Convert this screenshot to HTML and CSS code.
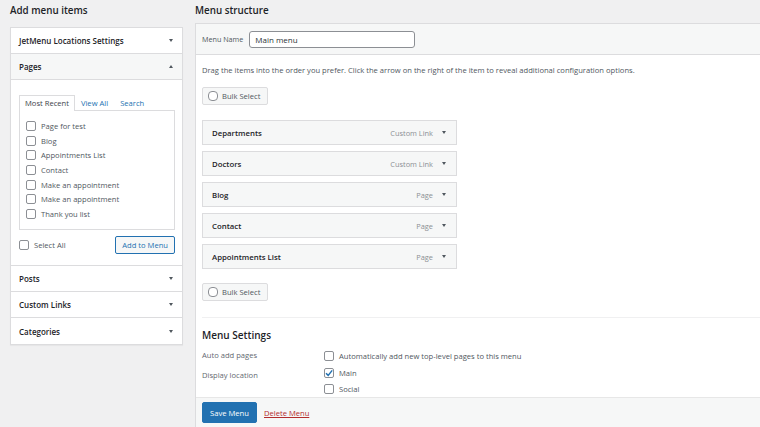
FILE: index.html
```html
<!DOCTYPE html>
<html>
<head>
<meta charset="utf-8">
<link rel="stylesheet" href="styles.css">
</head>
<body>
<div class="page">
  <div class="left">
    <h2 class="col-title">Add menu items</h2>
    <div class="accordion">
      <div class="acc-head"><span>JetMenu Locations Settings</span><span class="arr down"></span></div>
      <div class="acc-head open"><span>Pages</span><span class="arr up"></span></div>
      <div class="acc-body">
        <div class="tabs">
          <span class="tab active">Most Recent</span>
          <span class="tab">View All</span>
          <span class="tab">Search</span>
        </div>
        <div class="tab-panel">
          <label class="item"><span class="cb"></span>Page for test</label>
          <label class="item"><span class="cb"></span>Blog</label>
          <label class="item"><span class="cb"></span>Appointments List</label>
          <label class="item"><span class="cb"></span>Contact</label>
          <label class="item"><span class="cb"></span>Make an appointment</label>
          <label class="item"><span class="cb"></span>Make an appointment</label>
          <label class="item"><span class="cb"></span>Thank you list</label>
        </div>
        <div class="add-row">
          <label class="item sel-all"><span class="cb"></span>Select All</label>
          <button class="btn-outline">Add to Menu</button>
        </div>
      </div>
      <div class="acc-head"><span>Posts</span><span class="arr down"></span></div>
      <div class="acc-head"><span>Custom Links</span><span class="arr down"></span></div>
      <div class="acc-head last"><span>Categories</span><span class="arr down"></span></div>
    </div>
  </div>
  <div class="right">
    <h2 class="col-title">Menu structure</h2>
    <div class="panel">
      <div class="panel-head">
        <span class="name-label">Menu Name</span>
        <div class="name-input">Main menu</div>
      </div>
      <div class="panel-body">
        <p class="hint">Drag the items into the order you prefer. Click the arrow on the right of the item to reveal additional configuration options.</p>
        <div class="bulk"><span class="cb round"></span>Bulk Select</div>
        <ul class="menu-items">
          <li><span class="mi-title">Departments</span><span class="mi-type">Custom Link</span><span class="arr down"></span></li>
          <li><span class="mi-title">Doctors</span><span class="mi-type">Custom Link</span><span class="arr down"></span></li>
          <li><span class="mi-title">Blog</span><span class="mi-type">Page</span><span class="arr down"></span></li>
          <li><span class="mi-title">Contact</span><span class="mi-type">Page</span><span class="arr down"></span></li>
          <li><span class="mi-title">Appointments List</span><span class="mi-type">Page</span><span class="arr down"></span></li>
        </ul>
        <div class="bulk"><span class="cb round"></span>Bulk Select</div>
        <div class="settings">
          <h3>Menu Settings</h3>
          <div class="set-row">
            <span class="set-label">Auto add pages</span>
            <div class="set-ctrl"><label class="item"><span class="cb"></span>Automatically add new top-level pages to this menu</label></div>
          </div>
          <div class="set-row loc">
            <span class="set-label">Display location</span>
            <div class="set-ctrl">
              <label class="item"><span class="cb checked"><svg viewBox="0 0 10 10" width="10" height="10"><path d="M2 5.2 L4.2 7.4 L8.2 2.4" fill="none" stroke="#2271b1" stroke-width="1.5"/></svg></span>Main</label>
              <label class="item"><span class="cb"></span>Social</label>
            </div>
          </div>
        </div>
      </div>
      <div class="panel-foot">
        <button class="btn-primary">Save Menu</button>
        <a class="delete">Delete Menu</a>
      </div>
    </div>
  </div>
</div>
</body>
</html>
```
FILE: styles.css
```css
* { box-sizing: border-box; }
body {
  margin: 0;
  background: #f0f0f1;
  font-family: "Open Sans", "Noto Sans", sans-serif;
  font-size: 7.6px;
  color: #3c434a;
  overflow: hidden;
}
.page {
  display: flex;
  gap: 12px;
  padding-left: 10px;
  height: 427px;
}
.left { width: 173px; flex: none; }
.right { flex: 1; display: flex; flex-direction: column; }
.col-title {
  margin: 0;
  height: 27px;
  padding-top: 3px;
  font-size: 9.8px;
  font-weight: 600;
  color: #1d2327;
  line-height: 16px;
}
.accordion {
  background: #fff;
  border: 1px solid #dcdcde;
  box-shadow: 0 1px 1px rgba(0,0,0,0.04);
}
.acc-head {
  height: 26px;
  display: flex;
  align-items: center;
  justify-content: space-between;
  padding: 0 8px 0 8px;
  font-weight: 600;
  font-size: 8px;
  color: #1d2327;
  border-bottom: 1px solid #dcdcde;
}
.acc-head.open { background: #f6f7f7; }
.acc-head.last { border-bottom: none; }
.arr {
  width: 0; height: 0;
  border-left: 2.5px solid transparent;
  border-right: 2.5px solid transparent;
  margin-right: 1px;
}
.arr.down { border-top: 3.5px solid #50575e; }
.arr.up { border-bottom: 3.5px solid #50575e; }
.acc-body {
  padding: 15px 7px 0 8px;
  height: 186px;
  border-bottom: 1px solid #dcdcde;
}
.tabs {
  display: flex;
  height: 15px;
  position: relative;
  z-index: 1;
}
.tab {
  padding: 0 5px;
  line-height: 14px;
  color: #2271b1;
  border: 1px solid transparent;
  border-bottom: none;
}
.tab.active {
  color: #3c434a;
  border-color: #dcdcde;
  background: #fff;
  height: 16px;
}
.tab-panel {
  border: 1px solid #dcdcde;
  height: 120px;
  padding: 8px 6px;
}
.item {
  display: flex;
  align-items: center;
  height: 14.6px;
  gap: 5px;
  color: #50575e;
}
.cb {
  width: 10px; height: 10px;
  border: 1px solid #8c8f94;
  border-radius: 2px;
  background: #fff;
  flex: none;
  display: inline-flex;
  align-items: center;
  justify-content: center;
}
.cb.round { border-radius: 4px; }
.cb svg { display: block; margin: -1px; }
.add-row {
  display: flex;
  justify-content: space-between;
  align-items: center;
  margin-top: 6px;
}
.btn-outline {
  font: inherit;
  height: 18px;
  padding: 0 6px;
  border: 1px solid #2271b1;
  border-radius: 2px;
  color: #2271b1;
  background: #f6f7f7;
}
.panel {
  flex: 1;
  background: #fff;
  border-left: 1px solid #dcdcde;
  border-top: 1px solid #dcdcde;
  display: flex;
  flex-direction: column;
}
.panel-head {
  height: 31px;
  background: #f6f7f7;
  border-bottom: 1px solid #dcdcde;
  display: flex;
  align-items: center;
  padding-left: 6px;
  gap: 6px;
}
.name-label { font-size: 7.2px; color: #50575e; }
.name-input {
  width: 166px;
  height: 17px;
  border: 1px solid #8c8f94;
  border-radius: 3px;
  background: #fff;
  padding-left: 5px;
  line-height: 15px;
  font-size: 8px;
  color: #2c3338;
}
.panel-body {
  flex: 1;
  padding: 0 0 0 6px;
}
.hint {
  margin: 0;
  padding-top: 9px;
  height: 32px;
  line-height: 12px;
  color: #50575e;
}
.bulk {
  width: 66px;
  height: 18px;
  border: 1px solid #dcdcde;
  border-radius: 2px;
  background: #f6f7f7;
  display: flex;
  align-items: center;
  gap: 4px;
  padding-left: 5px;
  color: #50575e;
}
.menu-items {
  list-style: none;
  margin: 15px 0 14px;
  padding: 0;
  display: flex;
  flex-direction: column;
  gap: 6px;
}
.menu-items li {
  width: 255px;
  height: 25px;
  background: #f6f7f7;
  border: 1px solid #dcdcde;
  display: flex;
  align-items: center;
  padding: 0 9px 0 9px;
}
.mi-title { font-weight: 600; color: #1d2327; flex: 1; font-size: 7.8px; }
.mi-type { color: #8c8f94; margin-right: 9px; font-size: 7.4px; }
.settings {
  margin-top: 16px;
  border-top: 1px solid #f0f0f1;
  padding-top: 10px;
}
.settings h3 {
  margin: 0 0 5px;
  font-size: 10px;
  font-weight: 600;
  color: #1d2327;
  line-height: 15px;
}
.set-row { display: flex; }
.set-label { width: 122px; color: #646970; line-height: 15px; height: 20px; }
.set-ctrl .item { height: 15px; gap: 5px; color: #50575e; }
.set-row.loc .set-ctrl .item { height: 16px; }
.set-row.loc .set-ctrl { margin-top: -3px; }
.panel-foot {
  height: 30px;
  background: #f6f7f7;
  border-top: 1px solid #e7e7e7;
  display: flex;
  align-items: center;
  padding-left: 6px;
  gap: 7px;
  flex: none;
}
.btn-primary {
  font: inherit;
  height: 21px;
  width: 55px;
  padding: 0;
  border: 1px solid #2271b1;
  border-radius: 2px;
  background: #2271b1;
  color: #fff;
}
.delete { color: #b32d2e; text-decoration: underline; }
```
